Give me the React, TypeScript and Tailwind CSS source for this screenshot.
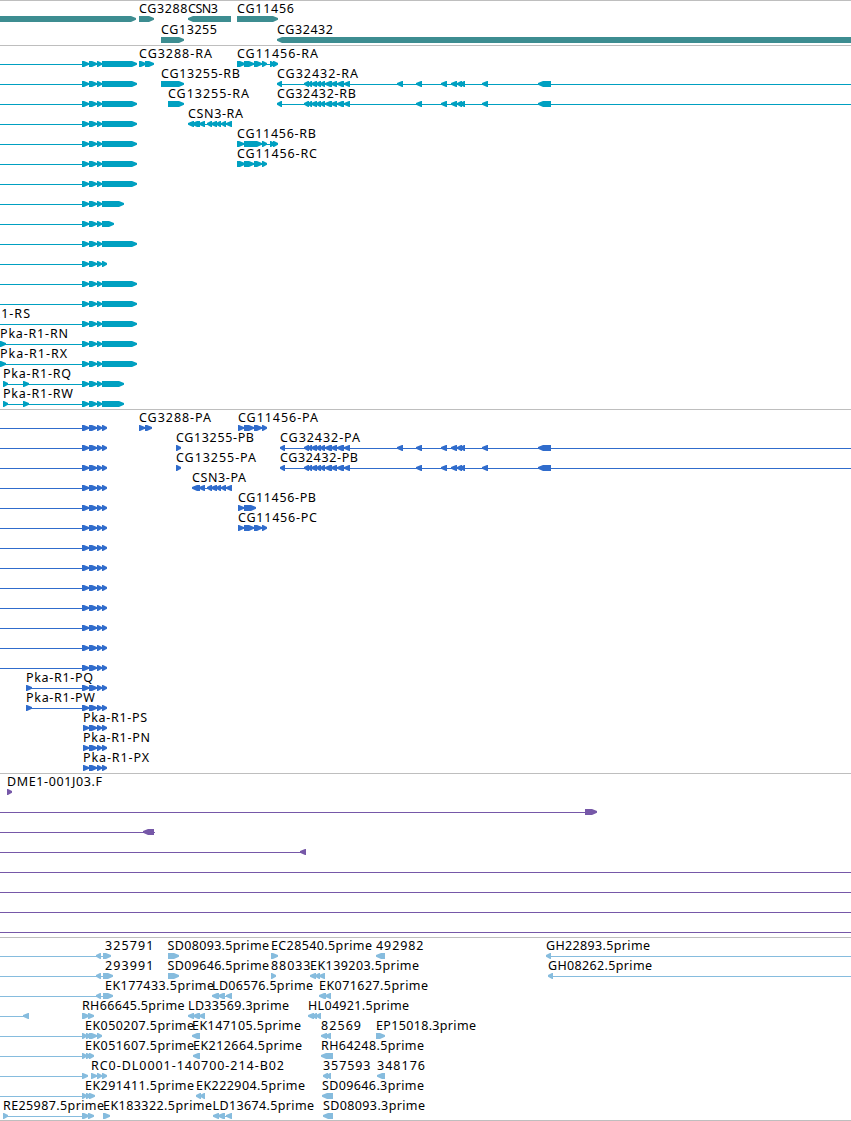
type Label = [text: string, start: number, end: number];
type Span = [start: number, end: number];

interface Row {
  labels?: Label[];
  lines?: Span[];
  fwd?: Span[];
  rev?: Span[];
}

interface TrackData {
  name: string;
  color: string;
  pad: string;
  rowHeight: number;
  rows: Row[];
}

const WIDTH = 851;

const genes: Row[] = [
  {
    labels: [["CG3288", 139, 187.5], ["CSN3", 188, 218], ["CG11456", 237, 294]],
    fwd: [[-10, 136], [139, 154], [237, 278]],
    rev: [[188, 231]],
  },
  {
    labels: [["CG13255", 161, 217], ["CG32432", 277, 333]],
    fwd: [[161, 184]],
    rev: [[277, 861]],
  },
];

// Exons shared by the Pka-R1 isoforms
const pkaExons: Span[] = [[82, 89], [89, 97], [97, 102]];

const pka = (end: number, extra: Row = {}): Row => ({
  labels: extra.labels,
  lines: [[0, 102], ...(extra.lines ?? [])],
  fwd: [...pkaExons, [102, end], ...(extra.fwd ?? [])],
  rev: extra.rev,
});

const cg32432: Span[] = [
  [304, 309], [308, 312], [311, 317], [316, 321], [320, 325], [325, 332], [331, 337], [337, 344], [344, 350],
  [416, 422], [441, 447], [451, 457], [457, 462], [460, 465], [482, 488], [538, 551],
];

const csn3: Span[] = [[199, 205], [207, 212], [211, 217], [216, 221], [221, 226], [226, 232]];

const transcripts: Row[] = [
  pka(137, {
    labels: [["CG3288-RA", 139, 212], ["CG11456-RA", 237, 318]],
    lines: [[139, 150], [237, 275]],
    fwd: [[139, 146], [145, 154], [237, 245], [244, 254], [254, 262], [262, 267], [270, 275], [273, 278]],
  }),
  pka(137, {
    labels: [["CG13255-RB", 161, 240], ["CG32432-RA", 277, 358]],
    lines: [[280, WIDTH]],
    fwd: [[161, 184]],
    rev: [[277, 282], ...cg32432, [397, 403]],
  }),
  pka(137, {
    labels: [["CG13255-RA", 168, 249], ["CG32432-RB", 277, 356]],
    lines: [[280, WIDTH]],
    fwd: [[168, 184]],
    rev: [[277, 282], ...cg32432],
  }),
  pka(137, {
    labels: [["CSN3-RA", 188, 243]],
    lines: [[190, 230]],
    rev: [[188, 194], [192, 200], ...csn3],
  }),
  pka(137, {
    labels: [["CG11456-RB", 237, 316]],
    lines: [[237, 275]],
    fwd: [[237, 244], [244, 262], [262, 267], [270, 275], [273, 278]],
  }),
  pka(137, {
    labels: [["CG11456-RC", 237, 317]],
    lines: [[237, 264]],
    fwd: [[237, 245], [244, 254], [254, 262], [262, 267]],
  }),
  pka(137),
  pka(124),
  pka(114),
  pka(137),
  pka(107),
  pka(137),
  pka(137),
  pka(137, { labels: [["Pka-R1-RS", -37, 30]] }),
  pka(137, { labels: [["Pka-R1-RN", 0, 68]], fwd: [[0, 6]] }),
  pka(137, { labels: [["Pka-R1-RX", 0, 67]], fwd: [[0, 6]] }),
  {
    labels: [["Pka-R1-RQ", 3, 71]],
    lines: [[3, 102]],
    fwd: [[3, 8], [23, 29], ...pkaExons, [102, 124]],
  },
  {
    labels: [["Pka-R1-RW", 3, 73]],
    lines: [[3, 102]],
    fwd: [[3, 8], [23, 29], ...pkaExons, [102, 124]],
  },
];

const pkaShort: Span[] = [[83, 89], [89, 97], [97, 102], [102, 107]];

const proteins: Row[] = [
  pka(107, {
    labels: [["CG3288-PA", 139, 211], ["CG11456-PA", 238, 318]],
    lines: [[139, 150], [238, 264]],
    fwd: [[139, 145], [145, 152], [238, 244], [244, 254], [254, 262], [262, 267]],
  }),
  pka(107, {
    labels: [["CG13255-PB", 176, 254], ["CG32432-PA", 280, 360]],
    lines: [[283, WIDTH]],
    fwd: [[176, 181]],
    rev: [[280, 285], ...cg32432, [397, 403]],
  }),
  pka(107, {
    labels: [["CG13255-PA", 176, 256], ["CG32432-PB", 280, 358]],
    lines: [[283, WIDTH]],
    fwd: [[176, 181]],
    rev: [[280, 285], ...cg32432],
  }),
  pka(107, {
    labels: [["CSN3-PA", 192, 246]],
    lines: [[194, 230]],
    rev: [[192, 200], ...csn3],
  }),
  pka(107, {
    labels: [["CG11456-PB", 238, 316]],
    lines: [[238, 250]],
    fwd: [[238, 244], [244, 256]],
  }),
  pka(107, {
    labels: [["CG11456-PC", 238, 317]],
    lines: [[238, 264]],
    fwd: [[238, 244], [244, 254], [254, 262], [262, 267]],
  }),
  pka(107),
  pka(107),
  pka(107),
  pka(107),
  pka(107),
  pka(107),
  pka(107),
  { labels: [["Pka-R1-PQ", 26, 93]], lines: [[26, 105]], fwd: [[26, 32], ...pkaExons, [102, 107]] },
  { labels: [["Pka-R1-PW", 26, 95]], lines: [[26, 105]], fwd: [[26, 32], ...pkaExons, [102, 107]] },
  { labels: [["Pka-R1-PS", 83, 147]], lines: [[83, 105]], fwd: pkaShort },
  { labels: [["Pka-R1-PN", 83, 150]], lines: [[83, 105]], fwd: pkaShort },
  { labels: [["Pka-R1-PX", 83, 149]], lines: [[83, 105]], fwd: pkaShort },
];

const clones: Row[] = [
  { labels: [["DME1-001J03.F", 7, 102]], fwd: [[7, 12]] },
  { lines: [[0, 590]], fwd: [[585, 597]] },
  { lines: [[0, 155]], rev: [[143, 154]] },
  { lines: [[0, 303]], rev: [[300, 306]] },
  { lines: [[0, WIDTH]] },
  { lines: [[0, WIDTH]] },
  { lines: [[0, WIDTH]] },
  { lines: [[0, WIDTH]] },
];

const ests: Row[] = [
  {
    labels: [
      ["325791", 105, 153.5], ["SD08093.5prime", 167.5, 269], ["EC28540.5prime", 271, 372],
      ["492982", 376, 423.5], ["GH22893.5prime", 546, 650],
    ],
    lines: [[0, 108], [548, WIDTH]],
    fwd: [[103, 111], [168, 179], [271, 278]],
    rev: [[96, 101], [376, 385], [546, 551]],
  },
  {
    labels: [
      ["293991", 105, 153.5], ["SD09646.5prime", 167.5, 269], ["88033", 271, 310.5],
      ["EK139203.5prime", 310, 419], ["GH08262.5prime", 548, 652],
    ],
    lines: [[0, 108], [312, 322], [550, WIDTH]],
    fwd: [[103, 113], [168, 179], [271, 276]],
    rev: [[96, 101], [310, 316], [315, 320], [319, 325], [548, 553]],
  },
  {
    labels: [["EK177433.5prime", 105, 214], ["LD06576.5prime", 212, 313], ["EK071627.5prime", 319, 428]],
    lines: [[0, 108], [214, 229], [321, 328]],
    fwd: [[103, 113]],
    rev: [[96, 101], [212, 219], [218, 225], [226, 232], [319, 326], [325, 331]],
  },
  {
    labels: [["RH66645.5prime", 82, 184.5], ["LD33569.3prime", 188, 289], ["HL04921.5prime", 308, 409]],
    lines: [[0, 26], [82, 92], [190, 202], [310, 319]],
    fwd: [[82, 89], [88, 94]],
    rev: [[23, 29], [188, 194], [193, 200], [199, 205], [308, 314], [312, 317], [316, 321]],
  },
  {
    labels: [
      ["EK050207.5prime", 85, 194], ["EK147105.5prime", 192, 301], ["82569", 321, 361],
      ["EP15018.3prime", 376, 476],
    ],
    lines: [[0, 100], [323, 329]],
    fwd: [[82, 87], [86, 91], [89, 97], [97, 102], [376, 385]],
    rev: [[192, 200], [321, 327], [325, 331]],
  },
  {
    labels: [["EK051607.5prime", 85, 194], ["EK212664.5prime", 193, 302], ["RH64248.5prime", 321, 424]],
    lines: [[0, 90]],
    fwd: [[82, 87], [86, 91], [89, 94]],
    rev: [[193, 200], [321, 333]],
  },
  {
    labels: [["RC0-DL0001-140700-214-B02", 91, 284], ["357593", 323, 370.5], ["348176", 377, 425]],
    lines: [[0, 84], [91, 105], [325, 329]],
    fwd: [[82, 88], [91, 97], [97, 102], [102, 107]],
    rev: [[323, 328], [326, 331], [377, 385]],
  },
  {
    labels: [["EK291411.5prime", 85, 194], ["EK222904.5prime", 196, 305], ["SD09646.3prime", 322, 424]],
    lines: [[0, 90], [198, 203]],
    fwd: [[82, 87], [86, 91], [89, 95]],
    rev: [[196, 201], [200, 205], [322, 333]],
  },
  {
    labels: [
      ["RE25987.5prime", 3, 104], ["EK183322.5prime", 103, 212], ["LD13674.5prime", 212.5, 314],
      ["SD08093.3prime", 323, 425],
    ],
    lines: [[3, 92], [215, 229]],
    fwd: [[3, 8], [82, 89], [88, 94], [103, 110]],
    rev: [[213, 219], [218, 225], [226, 232], [323, 333]],
  },
];

const tracks: TrackData[] = [
  { name: "genes", color: "text-[#3d8d91]", pad: "pt-0.5", rowHeight: 21, rows: genes },
  { name: "transcripts", color: "text-[#00a0c1]", pad: "pt-0.5 pb-px", rowHeight: 20, rows: transcripts },
  { name: "proteins", color: "text-[#306ccc]", pad: "pt-0.5 pb-px", rowHeight: 20, rows: proteins },
  { name: "clones", color: "text-[#7658a8]", pad: "pt-0.5 pb-px", rowHeight: 20, rows: clones },
  { name: "ests", color: "text-[#86bcde]", pad: "pt-0.5", rowHeight: 20, rows: ests },
];

// Block with a pointed end on the strand side
function arrowPoints([start, end]: Span, reverse: boolean) {
  const head = Math.min(5, end - start - 1);
  return reverse
    ? `${end},13 ${start + head},13 ${start},15 ${start},16.8 ${start + head},19 ${end},19`
    : `${start},13 ${start + 1},13 ${end - head},13 ${end},15 ${end},16.8 ${end - head},19 ${start},19`;
}

function FeatureRow({ row, height }: { row: Row; height: number }) {
  return (
    <svg className="block shrink-0 overflow-visible" width={WIDTH} height={height}>
      {row.lines?.map(([start, end], i) => (
        <rect key={i} x={start} y={16} width={end - start} height={1} fill="currentColor" />
      ))}
      {row.fwd?.map((span, i) => (
        <polygon key={i} points={arrowPoints(span, false)} fill="currentColor" />
      ))}
      {row.rev?.map((span, i) => (
        <polygon key={i} points={arrowPoints(span, true)} fill="currentColor" />
      ))}
      {row.labels?.map(([text, start, end]) => (
        <text
          key={text}
          x={start}
          y={10}
          textLength={end - start}
          lengthAdjust="spacing"
          className="fill-black"
        >
          {text}
        </text>
      ))}
    </svg>
  );
}

export default function App() {
  return (
    <main className="flex h-[1121px] w-[851px] flex-col overflow-hidden border-b border-[#bebebe] bg-white font-['Noto_Sans',sans-serif] text-[12.5px]">
      {tracks.map((track) => (
        <section key={track.name} className={`flex flex-col border-t border-[#bebebe] ${track.pad} ${track.color}`}>
          {track.rows.map((row, i) => (
            <FeatureRow key={i} row={row} height={track.rowHeight} />
          ))}
        </section>
      ))}
    </main>
  );
}
